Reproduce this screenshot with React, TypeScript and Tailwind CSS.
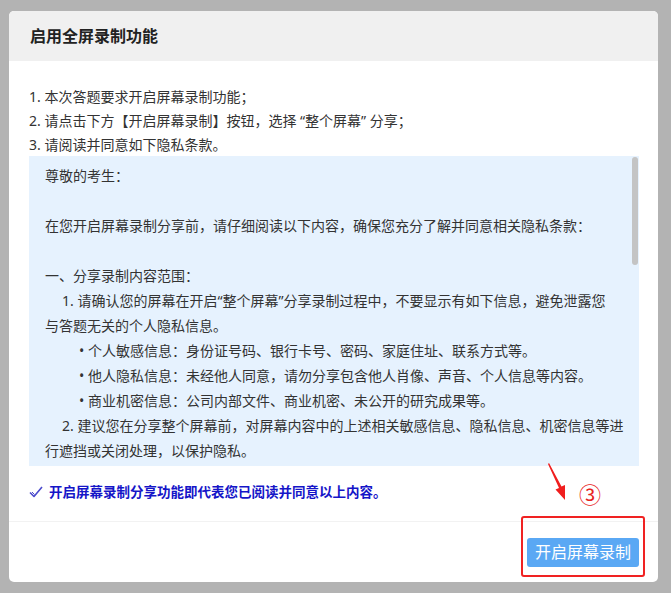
import React from "react";

const font = { fontFamily: '"Noto Sans", "Noto Sans CJK SC", sans-serif' };

function CheckIcon() {
  return (
    <svg width="14" height="12" viewBox="0 0 14 12" fill="none" className="shrink-0">
      <path d="M1 6.5 L5 10.5 L13 1" stroke="#4a4acc" strokeWidth="1.6" strokeLinejoin="round" />
      <path d="M3 6 L5.5 8.5" stroke="#4a4acc" strokeWidth="1" />
    </svg>
  );
}

function RedArrow() {
  return (
    <svg width="24" height="40" viewBox="0 0 24 40" className="absolute left-[546px] top-[462px]">
      <path d="M2 2 L13 26 L9.5 27.5 L19 38 L19 23 L15.5 24.5 L3 1 Z" fill="#f01e1e" />
    </svg>
  );
}

export default function App() {
  return (
    <div className="relative w-[671px] h-[593px] bg-[#b3b3b3] pt-[11px] pl-[9px] overflow-hidden" style={font}>
      <div className="w-[649px] h-[571px] bg-white rounded-[5px] overflow-hidden flex flex-col">
        <div className="h-[50px] shrink-0 bg-[#f0f0f0] flex items-center pl-[21px]">
          <h1 className="text-[16px] font-bold text-[#222]">启用全屏录制功能</h1>
        </div>

        <div className="pl-[20px] pt-[24px] text-[14px] leading-[24px] text-[#333]">
          <p>1. 本次答题要求开启屏幕录制功能；</p>
          <p>2. 请点击下方【开启屏幕录制】按钮，选择 “整个屏幕” 分享；</p>
          <p>3. 请阅读并同意如下隐私条款。</p>

          <div className="relative mt-[-1px] w-[610px] h-[310px] bg-[#e6f2fe] overflow-hidden pl-[16px] pt-[7px] text-[14px] leading-[25px] text-[#333] whitespace-nowrap">
            <p>尊敬的考生：</p>
            <p>&nbsp;</p>
            <p>在您开启屏幕录制分享前，请仔细阅读以下内容，确保您充分了解并同意相关隐私条款：</p>
            <p>&nbsp;</p>
            <p>一、分享录制内容范围：</p>
            <p className="pl-[17px]">1. 请确认您的屏幕在开启“整个屏幕”分享录制过程中，不要显示有如下信息，避免泄露您</p>
            <p>与答题无关的个人隐私信息。</p>
            <p className="pl-[34px]">• 个人敏感信息：身份证号码、银行卡号、密码、家庭住址、联系方式等。</p>
            <p className="pl-[34px]">• 他人隐私信息：未经他人同意，请勿分享包含他人肖像、声音、个人信息等内容。</p>
            <p className="pl-[34px]">• 商业机密信息：公司内部文件、商业机密、未公开的研究成果等。</p>
            <p className="pl-[17px]">2. 建议您在分享整个屏幕前，对屏幕内容中的上述相关敏感信息、隐私信息、机密信息等进</p>
            <p>行遮挡或关闭处理，以保护隐私。</p>
            <div className="absolute right-[1px] top-[1px] w-[6px] h-[108px] rounded-full bg-[#c4c4c4]" />
          </div>

          <div className="flex items-center gap-[6px] h-[24px] mt-[14px]">
            <CheckIcon />
            <span className="font-bold text-[13.5px] text-[#1515c8]">开启屏幕录制分享功能即代表您已阅读并同意以上内容。</span>
          </div>
        </div>

        <div className="mt-[17px] border-t border-[#f2f2f2] flex-1 flex justify-end items-start pt-[16px] pr-[19px]">
          <button className="w-[112px] h-[29px] rounded-[3px] bg-[#5aa8f4] text-white text-[16px] leading-[29px]">
            开启屏幕录制
          </button>
        </div>
      </div>

      <RedArrow />
      <span className="absolute left-[579px] top-[481px] text-[22px] leading-[26px] text-[#e8231e]">③</span>
      <div className="absolute left-[521px] top-[516px] w-[124px] h-[61px] border-2 border-[#f02222] rounded-[3px]" />
    </div>
  );
}
